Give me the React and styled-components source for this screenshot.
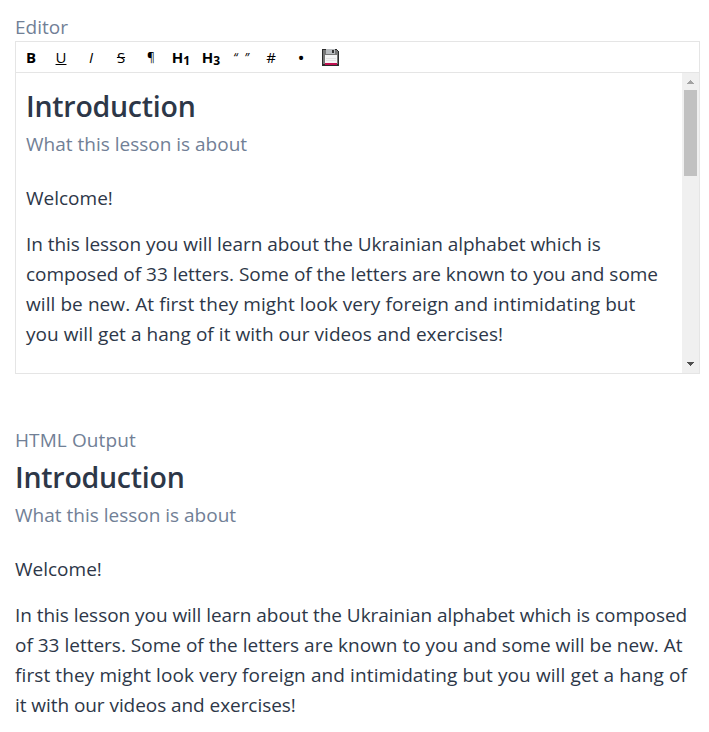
import React from 'react';
import styled, { createGlobalStyle } from 'styled-components';

const GlobalStyle = createGlobalStyle`
  *, *::before, *::after { box-sizing: border-box; }
  body {
    margin: 0;
    background: #fff;
    color: #2d3748;
    font-family: "Open Sans", "Noto Sans", sans-serif;
    font-size: 19px;
    line-height: 30px;
  }
`;

const Page = styled.main`
  padding: 12px 9px 0 15px;
  height: 732px;
  overflow: hidden;
`;

const Label = styled.div`
  height: 29px;
  color: #718096;
  letter-spacing: ${(p) => p.$spacing || 0}px;
`;

const EditorFrame = styled.section`
  height: 333px;
  border: 1px solid #e5e5e5;
  display: flex;
  flex-direction: column;
`;

const Toolbar = styled.div`
  display: flex;
  height: 31px;
  border-bottom: 1px solid #e5e5e5;
`;

const ToolButton = styled.button`
  width: 30px;
  height: 30px;
  padding: ${(p) => p.$drop ?? 1}px 0 0;
  border: 0;
  background: transparent;
  color: #000;
  font-family: "Open Sans", "Noto Sans", sans-serif;
  font-size: ${(p) => p.$size || 14}px;
  font-weight: ${(p) => (p.$bold ? 700 : 400)};
  font-style: ${(p) => (p.$italic ? 'italic' : 'normal')};
  text-decoration: ${(p) => p.$line || 'none'};
  word-spacing: ${(p) => p.$gap || 0}px;
  line-height: 29px;
  display: flex;
  align-items: center;
  justify-content: center;
  white-space: nowrap;
`;

const Sub = styled.sub`
  font-size: 12px;
  line-height: 1;
  vertical-align: baseline;
  position: relative;
  top: 3px;
`;

const EditorBody = styled.div`
  flex: 1;
  display: flex;
  min-height: 0;
`;

const EditorContent = styled.div`
  flex: 1;
  padding: 10px;
  outline: none;
`;

const Scrollbar = styled.div`
  width: 17px;
  background: #f0f0f0;
  display: flex;
  flex-direction: column;
  align-items: center;
`;

const ScrollArrow = styled.svg`
  width: 17px;
  height: 17px;
  flex: none;
  fill: ${(p) => p.$color};
`;

const ScrollTrack = styled.div`
  flex: 1;
`;

const ScrollThumb = styled.div`
  width: 13px;
  height: 86px;
  background: #c1c1c1;
`;

const Output = styled.section`
  margin-top: 51px;
`;

const Title = styled.h1`
  margin: 0;
  height: 46px;
  font-size: 28.5px;
  font-weight: 600;
  letter-spacing: -0.25px;
  line-height: 46px;
`;

const Subtitle = styled.p`
  margin: 0 0 24px;
  color: #718096;
`;

const Paragraph = styled.p`
  margin: 0 0 16px;
`;

const Line = styled.span`
  display: block;
  white-space: nowrap;
  letter-spacing: ${(p) => p.$spacing}px;
`;

const editorLines = [
  ['In this lesson you will learn about the Ukrainian alphabet which is', -0.05],
  ['composed of 33 letters. Some of the letters are known to you and some', -0.015],
  ['will be new. At first they might look very foreign and intimidating but', 0.075],
  ['you will get a hang of it with our videos and exercises!', 0.05],
];

const outputLines = [
  ['In this lesson you will learn about the Ukrainian alphabet which is composed', -0.045],
  ['of 33 letters. Some of the letters are known to you and some will be new. At', 0],
  ['first they might look very foreign and intimidating but you will get a hang of', 0.105],
  ['it with our videos and exercises!', -0.06],
];

const FloppyIcon = () => (
  <svg width="18" height="18" viewBox="0 0 18 18" shapeRendering="crispEdges" aria-hidden="true">
    <path d="M0 1h15v1h1v1h1v15H0z" fill="#2b2b2b" />
    <path d="M1 2h14v1h1v13H1z" fill="#777" />
    <path d="M4 1h9v5H4z" fill="#b9bcbf" />
    <path d="M10 2h2v3h-2z" fill="#333" />
    <path d="M3 7h12v8H3z" fill="#f5f5f5" />
    <path d="M4 10h10v1H4zM4 12h10v1H4z" fill="#e3e3e3" />
    <path d="M3 15h12v2H3z" fill="#c01050" />
  </svg>
);

function Lesson({ lines }) {
  return (
    <>
      <Title>Introduction</Title>
      <Subtitle>What this lesson is about</Subtitle>
      <Paragraph>Welcome!</Paragraph>
      <Paragraph>
        {lines.map(([text, spacing]) => (
          <Line key={text} $spacing={spacing}>{text} </Line>
        ))}
      </Paragraph>
    </>
  );
}

export default function App() {
  return (
    <Page>
      <GlobalStyle />
      <Label>Editor</Label>
      <EditorFrame>
        <Toolbar>
          <ToolButton $bold $size={15}>B</ToolButton>
          <ToolButton $line="underline" $size={15}>U</ToolButton>
          <ToolButton $italic $size={15}>I</ToolButton>
          <ToolButton $line="line-through" $size={15}>S</ToolButton>
          <ToolButton $size={12}>¶</ToolButton>
          <ToolButton $bold $size={15}>H<Sub>1</Sub></ToolButton>
          <ToolButton $bold $size={15}>H<Sub>3</Sub></ToolButton>
          <ToolButton $italic $size={12} $gap={4} $drop={0}>“ ”</ToolButton>
          <ToolButton $size={15}>#</ToolButton>
          <ToolButton $size={19} $drop={2}>•</ToolButton>
          <ToolButton $drop={0} aria-label="Save"><FloppyIcon /></ToolButton>
        </Toolbar>
        <EditorBody>
          <EditorContent>
            <Lesson lines={editorLines} />
          </EditorContent>
          <Scrollbar>
            <ScrollArrow viewBox="0 0 17 17" $color="#a3a3a3" shapeRendering="crispEdges">
              <path d="M8 7h1v1h1v1h1v1h1v1H5v-1h1V9h1V8h1z" />
            </ScrollArrow>
            <ScrollTrack><ScrollThumb /></ScrollTrack>
            <ScrollArrow viewBox="0 0 17 17" $color="#505050" shapeRendering="crispEdges">
              <path d="M5 6h7v1h-1v1h-1v1H9v1H8V9H7V8H6V7H5z" />
            </ScrollArrow>
          </Scrollbar>
        </EditorBody>
      </EditorFrame>
      <Output>
        <Label $spacing={0.1}>HTML Output</Label>
        <Lesson lines={outputLines} />
      </Output>
    </Page>
  );
}
